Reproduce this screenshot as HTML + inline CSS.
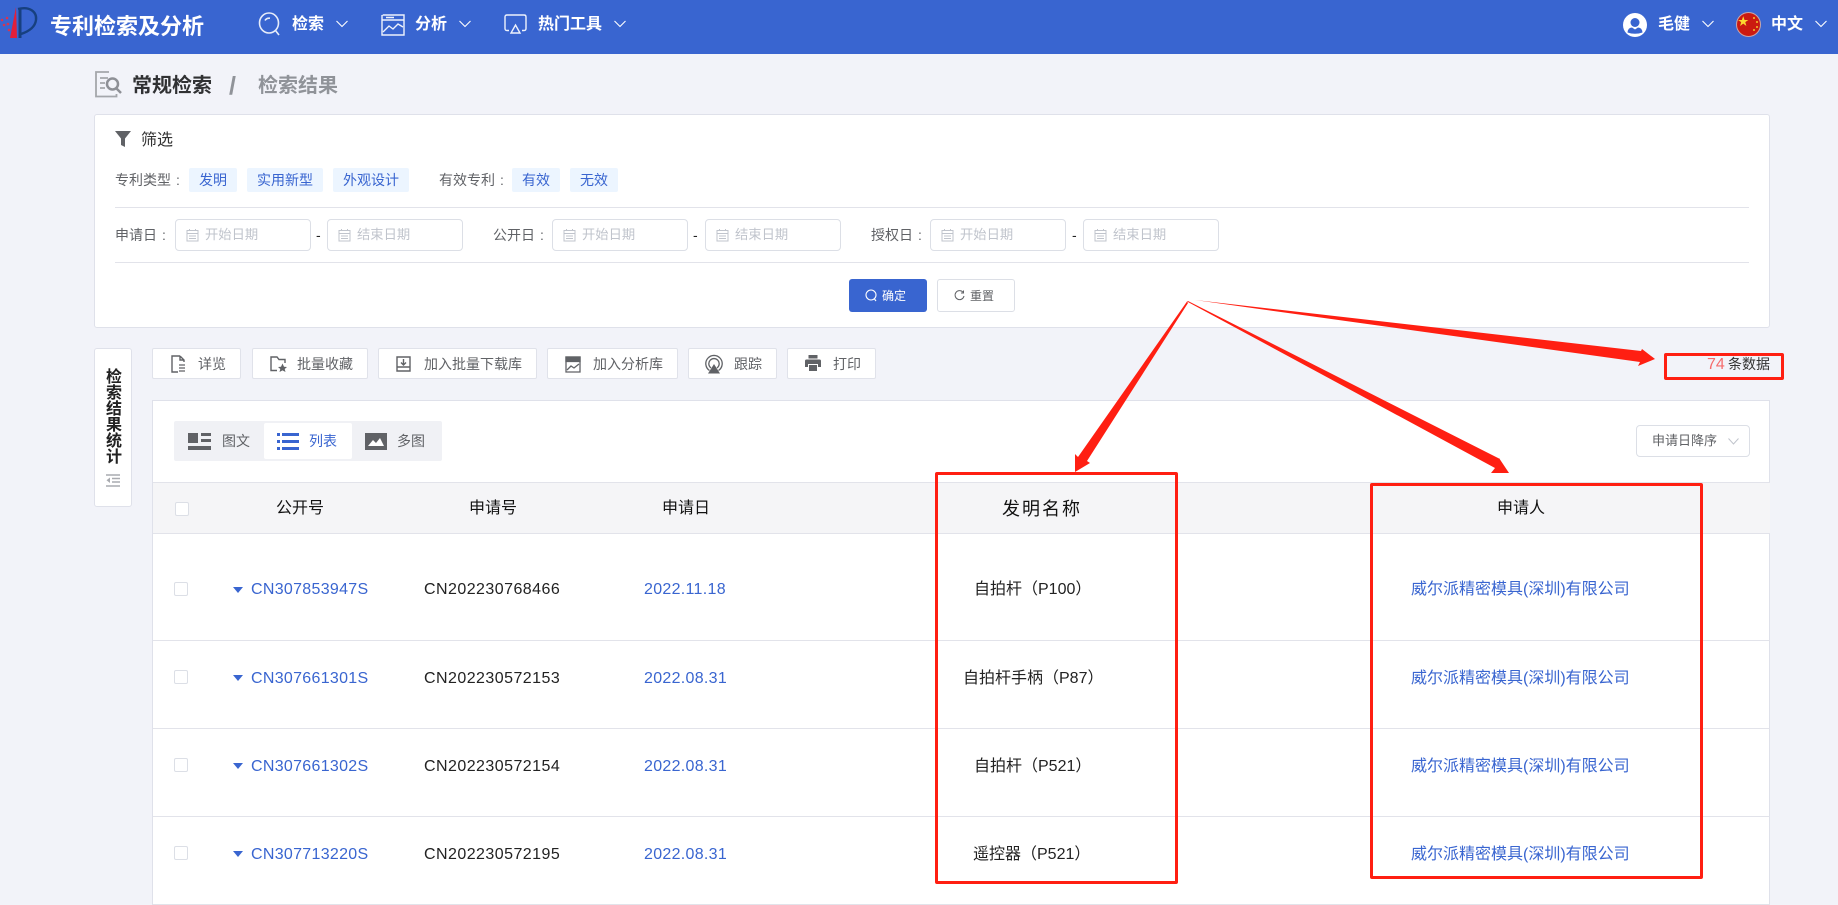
<!DOCTYPE html>
<html lang="zh"><head><meta charset="utf-8"><title>专利检索及分析</title>
<style>
*{box-sizing:border-box;margin:0;padding:0}
html,body{width:1838px;height:905px;overflow:hidden;background:#f2f3f9;font-family:"Liberation Sans","Noto Sans CJK SC",sans-serif;color:#222}
.a{position:absolute}
.t{position:absolute;white-space:nowrap;line-height:20px;height:20px}
.c{transform:translateX(-50%)}
.box{position:absolute;background:#fff;border:1px solid #dfe1ea;border-radius:3px}
.btn{position:absolute;top:348px;height:31px;background:#fff;border:1px solid #e0e2ea;border-radius:2px}
.tag{position:absolute;top:168px;height:24px;line-height:24px;background:#ecf5ff;color:#3965d0;font-size:14px;text-align:center;border-radius:2px}
.in{position:absolute;top:219px;height:32px;width:136px;background:#fff;border:1px solid #dcdfe6;border-radius:4px;color:#c0c4cc;font-size:13.3px;line-height:30px;padding-left:29px}
.in svg{position:absolute;left:10px;top:8px}
.lb{font-size:14px;color:#606266}
.lb i{font-style:normal;margin-left:5px}
.g{font-size:14px;color:#606266}
.b{font-size:16px;color:#3965d0}
.k{font-size:16px;color:#222}
.hd{font-size:16px;color:#111}
.nav{font-size:16px;font-weight:bold;color:#fff}
.line{position:absolute;height:1px;background:#e2e3ea}
.cb{position:absolute;width:14px;height:14px;background:#fff;border:1px solid #dcdfe6;border-radius:2px}
.tri{position:absolute;left:233px;width:0;height:0;border-left:5px solid transparent;border-right:5px solid transparent;border-top:6px solid #3965d0}
.r{position:absolute;border:3px solid #ff1f12;border-radius:2px}
svg{display:block}
</style></head><body>
<!-- header -->
<div class="a" style="left:0;top:0;width:1838px;height:54px;background:#3965d0"></div>
<svg class="a" style="left:0;top:5px" width="40" height="36" viewBox="0 0 40 36">
<path d="M18 4C30 1 37 7 36 15C35 23 27 27 21 29" fill="none" stroke="#17407f" stroke-width="2.4"/>
<path d="M20 4L20 33" stroke="#17407f" stroke-width="3"/>
<path d="M16 2L10 33L17 33Z" fill="#e21f3a"/>
<g fill="#d8344f"><circle cx="2" cy="15" r="1.3"/><circle cx="7" cy="13" r="1.3"/><circle cx="4" cy="20" r="1.3"/><circle cx="8" cy="19" r="1.3"/><circle cx="9" cy="25" r="1.3"/></g>
</svg>
<div class="t" style="left:50px;top:16px;font-size:22px;font-weight:bold;color:#fff;line-height:22px;height:22px">专利检索及分析</div>
<svg class="a" style="left:258px;top:12px" width="24" height="24" viewBox="0 0 24 24" fill="none" stroke="#e6ecfa" stroke-width="1.6"><ellipse cx="11" cy="11" rx="9.5" ry="10"/><path d="M7 8.5C8 6.5 10 6 12 6.2M17.5 18.500L21 23"/></svg>
<div class="t nav" style="left:292px;top:15px">检索</div>
<svg class="a" style="left:336px;top:20px" width="12" height="8" viewBox="0 0 12 8" fill="none" stroke="#fff" stroke-width="1.1"><path d="M.5 1L6 6.500L11.500 1"/></svg>
<svg class="a" style="left:381px;top:14px" width="24" height="22" viewBox="0 0 24 22" fill="none" stroke="#eef2fc" stroke-width="1.4"><path d="M1.700 1H23V21H1V1M1 6H23M5 3.500H13"/><path d="M2 18L8 12L12 15L17 10L22 13" /></svg>
<div class="t nav" style="left:415px;top:15px">分析</div>
<svg class="a" style="left:459px;top:20px" width="12" height="8" viewBox="0 0 12 8" fill="none" stroke="#fff" stroke-width="1.1"><path d="M.5 1L6 6.500L11.500 1"/></svg>
<svg class="a" style="left:504px;top:14px" width="23" height="20" viewBox="0 0 23 20" fill="none" stroke="#eef2fc" stroke-width="1.4"><path d="M5 16.500H3Q1 16.500 1 14.500V3Q1 1 3 1H20Q22 1 22 3V14.500Q22 16.500 20 16.500H18"/><path d="M11.500 11L16 19H7Z"/></svg>
<div class="t nav" style="left:538px;top:15px">热门工具</div>
<svg class="a" style="left:614px;top:20px" width="12" height="8" viewBox="0 0 12 8" fill="none" stroke="#fff" stroke-width="1.1"><path d="M.5 1L6 6.500L11.500 1"/></svg>
<svg class="a" style="left:1623px;top:13px" width="24" height="24" viewBox="0 0 24 24"><circle cx="12" cy="12" r="12" fill="#fff"/><circle cx="12" cy="9.500" r="4.500" fill="#3965d0"/><path d="M4.500 19.500Q5 14.500 9 14.500L12 16.500L15 14.500Q19 14.500 19.500 19.500Q12 22 4.500 19.500Z" fill="#3965d0"/></svg>
<div class="t" style="left:1658px;top:15px;font-size:16px;font-weight:bold;color:#fff">毛健</div>
<svg class="a" style="left:1702px;top:20px" width="12" height="8" viewBox="0 0 12 8" fill="none" stroke="#fff" stroke-width="1.1"><path d="M.5 1L6 6.500L11.500 1"/></svg>
<svg class="a" style="left:1736px;top:12px" width="25" height="25" viewBox="0 0 25 25"><circle cx="12.500" cy="12.500" r="12" fill="#cb1a10" stroke="#c9a5a8"/><path d="M8.500 5.500L10 10H14.500L10.900 12.500L12.200 17L8.500 14.200L4.800 17L6.100 12.500L2.500 10H7Z" fill="#fbd92f" transform="translate(0 -.5) scale(.85)"/><g fill="#f5c52a"><circle cx="18" cy="6" r="1"/><circle cx="21" cy="10" r="1"/><circle cx="21" cy="15" r="1"/><circle cx="18" cy="18" r="1"/></g></svg>
<div class="t" style="left:1771px;top:15px;font-size:16px;font-weight:bold;color:#fff">中文</div>
<svg class="a" style="left:1815px;top:20px" width="12" height="8" viewBox="0 0 12 8" fill="none" stroke="#fff" stroke-width="1.1"><path d="M.5 1L6 6.500L11.500 1"/></svg>
<!-- breadcrumb -->
<svg class="a" style="left:94px;top:71px" width="30" height="27" viewBox="0 0 30 27" fill="none" stroke="#a4a6ab" stroke-width="1.800"><path d="M15 1H2V25.500H22.500V23"/><path d="M6 7H14M6 12H11M6 17H11"/><circle cx="18.500" cy="13" r="5.500" stroke-width="2.500" stroke="#8e9096"/><path d="M22.500 17.500L27 22" stroke-width="2.500" stroke="#8e9096"/></svg>
<div class="t" style="left:132px;top:76px;font-size:20px;font-weight:bold;color:#303133">常规检索</div>
<div class="t" style="left:229px;top:76px;font-size:25px;font-weight:bold;color:#909399">/</div>
<div class="t" style="left:258px;top:76px;font-size:20px;font-weight:bold;color:#909399">检索结果</div>
<!-- filter card -->
<div class="box" style="left:94px;top:114px;width:1676px;height:214px"></div>
<svg class="a" style="left:115px;top:131px" width="16" height="16" viewBox="0 0 16 16"><path d="M0 0H16L10 7.500V16L6 14V7.500Z" fill="#606266"/></svg>
<div class="t" style="left:141px;top:131px;font-size:16px;color:#333">筛选</div>
<div class="t lb" style="left:115px;top:170px">专利类型<i>:</i></div>
<div class="tag" style="left:189px;width:48px">发明</div>
<div class="tag" style="left:247px;width:76px">实用新型</div>
<div class="tag" style="left:333px;width:76px">外观设计</div>
<div class="t lb" style="left:439px;top:170px">有效专利<i>:</i></div>
<div class="tag" style="left:512px;width:48px">有效</div>
<div class="tag" style="left:570px;width:48px">无效</div>
<div class="line" style="left:115px;top:207px;width:1634px"></div>
<div class="line" style="left:115px;top:262px;width:1634px"></div>
<div class="t lb" style="left:115px;top:225px">申请日<i>:</i></div>
<div class="in" style="left:175px"><svg width="13" height="14" viewBox="0 0 13 14" fill="none" stroke="#c0c4cc"><path d="M1 2.500H12V13H1ZM1 5.500H12M3.500 1V3M9.500 1V3M3 8H10M3 10.500H10"/></svg>开始日期</div>
<div class="t" style="left:316px;top:225px;font-size:14px">-</div>
<div class="in" style="left:327px"><svg width="13" height="14" viewBox="0 0 13 14" fill="none" stroke="#c0c4cc"><path d="M1 2.500H12V13H1ZM1 5.500H12M3.500 1V3M9.500 1V3M3 8H10M3 10.500H10"/></svg>结束日期</div>
<div class="t lb" style="left:493px;top:225px">公开日<i>:</i></div>
<div class="in" style="left:552px"><svg width="13" height="14" viewBox="0 0 13 14" fill="none" stroke="#c0c4cc"><path d="M1 2.500H12V13H1ZM1 5.500H12M3.500 1V3M9.500 1V3M3 8H10M3 10.500H10"/></svg>开始日期</div>
<div class="t" style="left:693px;top:225px;font-size:14px">-</div>
<div class="in" style="left:705px"><svg width="13" height="14" viewBox="0 0 13 14" fill="none" stroke="#c0c4cc"><path d="M1 2.500H12V13H1ZM1 5.500H12M3.500 1V3M9.500 1V3M3 8H10M3 10.500H10"/></svg>结束日期</div>
<div class="t lb" style="left:871px;top:225px">授权日<i>:</i></div>
<div class="in" style="left:930px"><svg width="13" height="14" viewBox="0 0 13 14" fill="none" stroke="#c0c4cc"><path d="M1 2.500H12V13H1ZM1 5.500H12M3.500 1V3M9.500 1V3M3 8H10M3 10.500H10"/></svg>开始日期</div>
<div class="t" style="left:1072px;top:225px;font-size:14px">-</div>
<div class="in" style="left:1083px"><svg width="13" height="14" viewBox="0 0 13 14" fill="none" stroke="#c0c4cc"><path d="M1 2.500H12V13H1ZM1 5.500H12M3.500 1V3M9.500 1V3M3 8H10M3 10.500H10"/></svg>结束日期</div>
<div class="a" style="left:849px;top:279px;width:78px;height:33px;background:#3965d0;border-radius:3px"></div>
<svg class="a" style="left:865px;top:289px" width="12" height="13" viewBox="0 0 12 13" fill="none" stroke="#fff" stroke-width="1.100"><circle cx="6" cy="6" r="5"/><path d="M9.500 10L11 12"/></svg>
<div class="t" style="left:882px;top:286px;font-size:12px;color:#fff">确定</div>
<div class="a" style="left:937px;top:279px;width:78px;height:33px;background:#fff;border:1px solid #dcdfe6;border-radius:3px"></div>
<svg class="a" style="left:954px;top:290px" width="11" height="11" viewBox="0 0 11 11" fill="none" stroke="#606266" stroke-width="1"><path d="M9 2.200A4.500 4.500 0 1 0 10 6"/><path d="M9.500 .5V3H7"/></svg>
<div class="t" style="left:970px;top:286px;font-size:12px;color:#606266">重置</div>
<!-- side tab -->
<div class="box" style="left:94px;top:348px;width:38px;height:159px"></div>
<div class="a" style="left:106px;top:370px;width:16px;font-size:16px;line-height:16px;color:#222;font-weight:bold">检索结果统计</div>
<svg class="a" style="left:106px;top:474px" width="14" height="13" viewBox="0 0 14 13" stroke="#a9abb0" stroke-width="1.500" fill="none"><path d="M0 1H14M6 4.500H14M6 8H14M0 12H14"/><path d="M4 3.500V9L.5 6.200Z" fill="#a9abb0" stroke="none"/></svg>
<!-- toolbar -->
<div class="btn" style="left:152px;width:89px"></div>
<svg class="a" style="left:171px;top:355px" width="14" height="18" viewBox="0 0 14 18" fill="none" stroke="#606266" stroke-width="1.400"><path d="M9 1H1V17H7M9 1L13 5V7M9 1V5H13"/><path d="M8 10H14M8 13H14M8 16H14" stroke-width="1.300"/></svg>
<div class="t g" style="left:198px;top:354px">详览</div>
<div class="btn" style="left:252px;width:116px"></div>
<svg class="a" style="left:270px;top:356px" width="17" height="16" viewBox="0 0 17 16" fill="none" stroke="#606266" stroke-width="1.400"><path d="M7 14.500H1V1H7L9 3.500H15V7"/><path d="M12.500 7.500L14 10.800L17 11L14.700 13L15.500 16L12.500 14.400L9.500 16L10.300 13L8 11L11 10.800Z" fill="#606266" stroke="none"/></svg>
<div class="t g" style="left:297px;top:354px">批量收藏</div>
<div class="btn" style="left:378px;width:159px"></div>
<svg class="a" style="left:396px;top:356px" width="15" height="16" viewBox="0 0 15 16" fill="none" stroke="#606266" stroke-width="1.400"><path d="M1 1H14V15H1ZM1 11H14M7.500 3V9M5 6.500L7.500 9L10 6.500"/></svg>
<div class="t g" style="left:424px;top:354px">加入批量下载库</div>
<div class="btn" style="left:547px;width:131px"></div>
<svg class="a" style="left:565px;top:356px" width="16" height="17" viewBox="0 0 16 17" fill="none" stroke="#606266" stroke-width="1.300"><path d="M1 1H15V16H1V1Z"/><path d="M1 1H15V5.500H1Z" fill="#606266"/><path d="M2 14L6 10L9 12L14 8"/></svg>
<div class="t g" style="left:593px;top:354px">加入分析库</div>
<div class="btn" style="left:688px;width:89px"></div>
<svg class="a" style="left:705px;top:354px" width="18" height="20" viewBox="0 0 18 20" fill="none" stroke="#606266" stroke-width="1.300"><path d="M4.500 16.500A8.200 8.200 0 1 1 13.500 16.500M6 14A5.200 5.200 0 1 1 12 14"/><path d="M9 10L15 19.500H3Z" fill="#606266" stroke="none"/></svg>
<div class="t g" style="left:734px;top:354px">跟踪</div>
<div class="btn" style="left:787px;width:89px"></div>
<svg class="a" style="left:805px;top:355px" width="16" height="16" viewBox="0 0 16 16" fill="#606266"><path d="M3.500 0H12.500V3.500H3.500Z"/><path d="M1.500 4.500H14.500Q16 4.500 16 6V12H13V9H3V12H0V6Q0 4.500 1.500 4.500Z"/><path d="M4 10H12V16H4Z"/></svg>
<div class="t g" style="left:833px;top:354px">打印</div>
<div class="t" style="left:1707px;top:355px;font-size:16px;color:#f56c6c">74</div>
<div class="t" style="left:1728px;top:354px;font-size:14px;color:#333">条数据</div>
<!-- main card -->
<div class="a" style="left:152px;top:400px;width:1618px;height:505px;background:#fff;border:1px solid #dfe1ea;border-bottom:none"></div>
<div class="a" style="left:174px;top:421px;width:268px;height:40px;background:#f0f1f5;border-radius:2px"></div>
<div class="a" style="left:264px;top:423px;width:88px;height:36px;background:#fff;border-radius:2px"></div>
<svg class="a" style="left:188px;top:433px" width="23" height="17" viewBox="0 0 23 17" fill="#606266"><path d="M0 0H10V10H0ZM13 0H23V3H13ZM13 6H23V9H13ZM0 13H23V17H0Z"/></svg>
<div class="t" style="left:222px;top:431px;font-size:14px;color:#606266">图文</div>
<svg class="a" style="left:277px;top:433px" width="22" height="17" viewBox="0 0 22 17" fill="#3965d0"><path d="M0 0H3V3H0ZM5 0H22V3H5ZM0 7H3V10H0ZM5 7H22V10H5ZM0 14H3V17H0ZM5 14H22V17H5Z"/></svg>
<div class="t" style="left:309px;top:431px;font-size:14px;color:#3965d0">列表</div>
<svg class="a" style="left:365px;top:433px" width="22" height="17" viewBox="0 0 22 17"><path d="M0 0H22V17H0Z" fill="#606266"/><path d="M3 13L8 7L11 10L15 5L19 13Z" fill="#fff"/></svg>
<div class="t" style="left:397px;top:431px;font-size:14px;color:#606266">多图</div>
<div class="a" style="left:1636px;top:425px;width:114px;height:32px;background:#fff;border:1px solid #dcdfe6;border-radius:4px"></div>
<div class="t" style="left:1652px;top:431px;font-size:13px;color:#606266">申请日降序</div>
<svg class="a" style="left:1728px;top:438px" width="11" height="7" viewBox="0 0 11 7" fill="none" stroke="#c0c4cc"><path d="M.5 .5L5.500 6L10.500 .5"/></svg>
<!-- table -->
<div class="a" style="left:153px;top:482px;width:1617px;height:52px;background:#f5f5f7;border-top:1px solid #e2e3ea;border-bottom:1px solid #e2e3ea"></div>
<div class="cb" style="left:175px;top:502px"></div>
<div class="t hd c" style="left:300px;top:499px">公开号</div>
<div class="t hd c" style="left:493px;top:499px">申请号</div>
<div class="t hd c" style="left:686px;top:499px">申请日</div>
<div class="t hd c" style="left:1041px;top:499px;font-size:18px;letter-spacing:2px;text-indent:2px">发明名称</div>
<div class="t hd c" style="left:1521px;top:499px">申请人</div>
<div class="line" style="left:153px;top:640px;width:1617px"></div>
<div class="line" style="left:153px;top:728px;width:1617px"></div>
<div class="line" style="left:153px;top:816px;width:1617px"></div>
<div class="line" style="left:153px;top:904px;width:1617px"></div>
<!-- row 1 -->
<div class="cb" style="left:174px;top:582px"></div><div class="tri" style="top:587px"></div>
<div class="t b" style="left:251px;top:580px;letter-spacing:.3px">CN307853947S</div>
<div class="t k" style="left:424px;top:580px;letter-spacing:.45px">CN202230768466</div>
<div class="t b" style="left:644px;top:580px;letter-spacing:.3px">2022.11.18</div>
<div class="t k" style="left:974px;top:580px">自拍杆（P100）</div>
<div class="t b" style="left:1411px;top:580px">威尔派精密模具(深圳)有限公司</div>
<!-- row 2 -->
<div class="cb" style="left:174px;top:670px"></div><div class="tri" style="top:675px"></div>
<div class="t b" style="left:251px;top:669px;letter-spacing:.3px">CN307661301S</div>
<div class="t k" style="left:424px;top:669px;letter-spacing:.45px">CN202230572153</div>
<div class="t b" style="left:644px;top:669px;letter-spacing:.3px">2022.08.31</div>
<div class="t k" style="left:963px;top:669px">自拍杆手柄（P87）</div>
<div class="t b" style="left:1411px;top:669px">威尔派精密模具(深圳)有限公司</div>
<!-- row 3 -->
<div class="cb" style="left:174px;top:758px"></div><div class="tri" style="top:763px"></div>
<div class="t b" style="left:251px;top:757px;letter-spacing:.3px">CN307661302S</div>
<div class="t k" style="left:424px;top:757px;letter-spacing:.45px">CN202230572154</div>
<div class="t b" style="left:644px;top:757px;letter-spacing:.3px">2022.08.31</div>
<div class="t k" style="left:974px;top:757px">自拍杆（P521）</div>
<div class="t b" style="left:1411px;top:757px">威尔派精密模具(深圳)有限公司</div>
<!-- row 4 -->
<div class="cb" style="left:174px;top:846px"></div><div class="tri" style="top:851px"></div>
<div class="t b" style="left:251px;top:845px;letter-spacing:.3px">CN307713220S</div>
<div class="t k" style="left:424px;top:845px;letter-spacing:.45px">CN202230572195</div>
<div class="t b" style="left:644px;top:845px;letter-spacing:.3px">2022.08.31</div>
<div class="t k" style="left:973px;top:845px">遥控器（P521）</div>
<div class="t b" style="left:1411px;top:845px">威尔派精密模具(深圳)有限公司</div>
<!-- annotations -->
<div class="r" style="left:935px;top:472px;width:243px;height:412px"></div>
<div class="r" style="left:1370px;top:483px;width:333px;height:396px"></div>
<div class="r" style="left:1664px;top:353px;width:120px;height:27px"></div>
<svg class="a" style="left:0;top:0" width="1838" height="905" viewBox="0 0 1838 905">
<g fill="#ff1f12">
<path d="M1187 301.500L1188 303L1087 461L1090 463L1075 472L1075 454L1078 457Z"/>
<path d="M1187 301.500L1188 301L1500 459L1499 458L1509 473L1491 473L1495 468Z"/>
<path d="M1195 300L1641 351L1642 349L1655 359L1638 366L1640 362Z"/>
</g></svg>
</body></html>
